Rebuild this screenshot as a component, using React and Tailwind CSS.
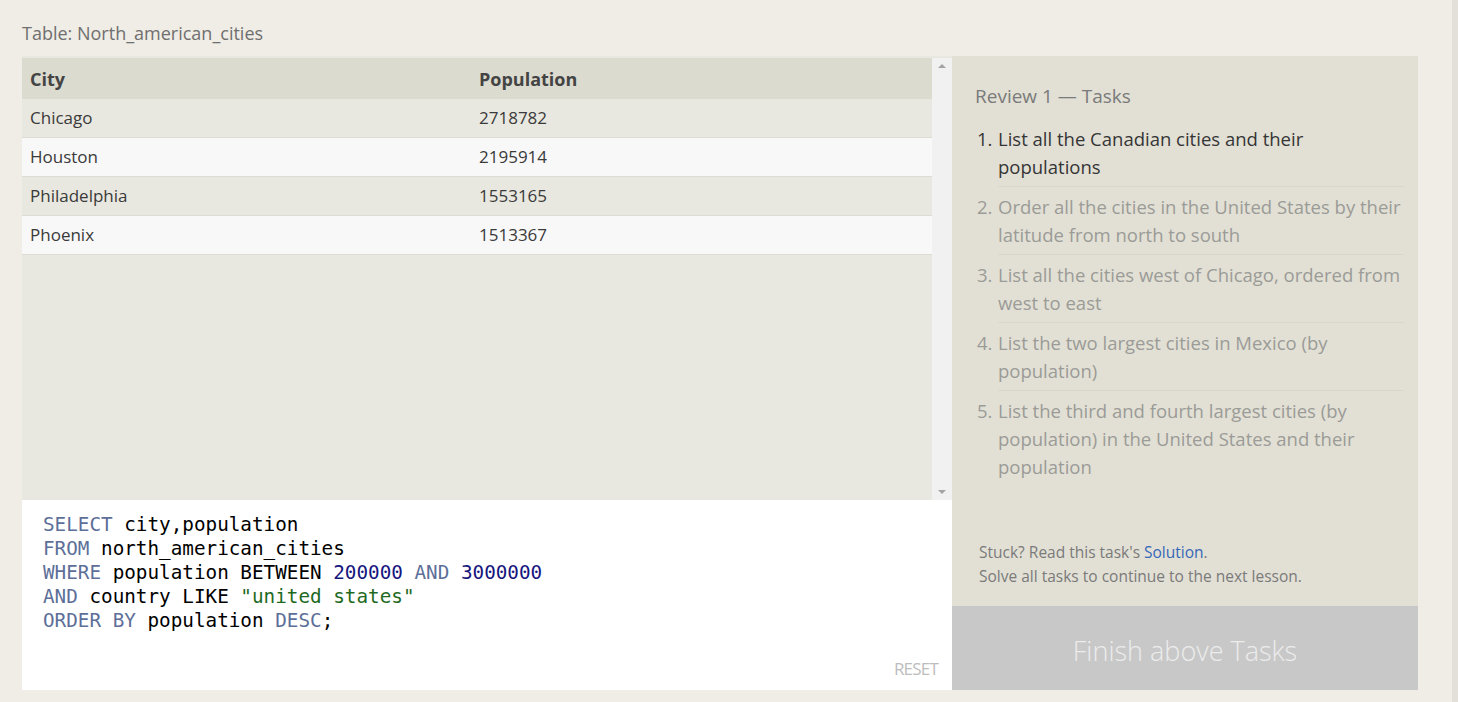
import React from "react";

const rows = [
  ["Chicago", "2718782"],
  ["Houston", "2195914"],
  ["Philadelphia", "1553165"],
  ["Phoenix", "1513367"],
];

const tasks = [
  "List all the Canadian cities and their populations",
  "Order all the cities in the United States by their latitude from north to south",
  "List all the cities west of Chicago, ordered from west to east",
  "List the two largest cities in Mexico (by population)",
  "List the third and fourth largest cities (by population) in the United States and their population",
];

const sans = { fontFamily: '"Open Sans", "Noto Sans", sans-serif' };

function K({ children }) {
  return <span className="text-[#5d6f98]">{children}</span>;
}
function N({ children }) {
  return <span className="text-[#16167e]">{children}</span>;
}

export default function App() {
  return (
    <div className="flex h-[702px] w-[1458px] bg-[#efede5]" style={sans}>
      <div className="flex-1 pl-[22px] pt-[20px]">
        <div className="text-[18px] leading-[26px] text-[#6f6f6f]">
          Table: North_american_cities
        </div>

        <div className="mt-[10px] flex w-[1396px]">
          {/* left: table + editor */}
          <div className="flex w-[930px] flex-col">
            <div className="flex h-[444px] bg-[#e9e8e0] pt-[2px]">
              <div className="flex-1">
                <div className="flex h-[41px] items-center bg-[#dcdbcf] pt-[2px] text-[18px] font-bold text-[#444]">
                  <div className="w-[449px] pl-[8px]">City</div>
                  <div className="pl-[8px]">Population</div>
                </div>
                {rows.map((r, i) => (
                  <div
                    key={r[0]}
                    className={`flex h-[39px] items-center border-b border-[#dcdbd4] text-[17px] text-[#3a3a3a] ${
                      i % 2 === 0 ? "bg-[#e9e8e0]" : "bg-[#f8f8f8]"
                    }`}
                  >
                    <div className="w-[449px] pl-[8px]">{r[0]}</div>
                    <div className="pl-[8px]">{r[1]}</div>
                  </div>
                ))}
              </div>
              {/* scrollbar */}
              <div className="flex w-[20px] flex-col items-center justify-between bg-[#f1f1f1] py-[6px]">
                <div className="h-0 w-0 border-x-[4px] border-b-[4px] border-x-transparent border-b-[#a3a3a3]" />
                <div className="h-0 w-0 border-x-[4px] border-t-[4px] border-x-transparent border-t-[#a3a3a3]" />
              </div>
            </div>

            <div className="relative h-[190px] w-[930px] bg-white pl-[21px] pt-[13px]">
              <pre
                className="text-[19.3px] leading-[24px] text-black"
                style={{ fontFamily: '"DejaVu Sans Mono", "Liberation Mono", monospace' }}
              >
                <K>SELECT</K> city,population{"\n"}
                <K>FROM</K> north_american_cities{"\n"}
                <K>WHERE</K> population BETWEEN <N>200000</N> <K>AND</K> <N>3000000</N>
                {"\n"}
                <K>AND</K> country LIKE <span className="text-[#1f6a1f]">"united states"</span>
                {"\n"}
                <K>ORDER BY</K> population <K>DESC</K>;
              </pre>
              <div className="absolute bottom-[9px] right-[14px] text-[17px] tracking-[-0.8px] text-[#bdbdbd]">
                RESET
              </div>
            </div>
          </div>

          {/* right: tasks */}
          <div className="flex w-[466px] flex-col">
            <div className="flex h-[550px] flex-col bg-[#e2e0d5] pl-[23px] pr-[14px] pt-[27px]">
              <div className="text-[19px] leading-[26px] text-[#7a7a7a]">Review 1 — Tasks</div>
              <ol className="mt-[16px]">
                {tasks.map((t, i) => (
                  <li key={i} className={`flex text-[18.5px] leading-[28px] ${i === 0 ? "text-[#353535]" : "text-[#9b9b97]"}`}>
                    <span className="w-[23px] shrink-0 pl-[2px]">{i + 1}.</span>
                    <span
                      className={`flex-1 pb-[5px] ${
                        i < tasks.length - 1 ? "mb-[6px] border-b border-[#d9d7cc]" : ""
                      }`}
                    >
                      {t}
                    </span>
                  </li>
                ))}
              </ol>
              <div className="mt-auto pb-[18px] pl-[4px] text-[15.5px] leading-[24px] text-[#7a7a7a]">
                <div>
                  Stuck? Read this task's <span className="text-[#3667b8]">Solution</span>.
                </div>
                <div>Solve all tasks to continue to the next lesson.</div>
              </div>
            </div>
            <div className="flex h-[84px] items-center justify-center bg-[#c8c8c8] pt-[6px] text-[27px] font-light text-[#ececec]">
              Finish above Tasks
            </div>
          </div>
        </div>
      </div>
      <div className="w-[6px] bg-[#e3e0d9]" />
    </div>
  );
}
